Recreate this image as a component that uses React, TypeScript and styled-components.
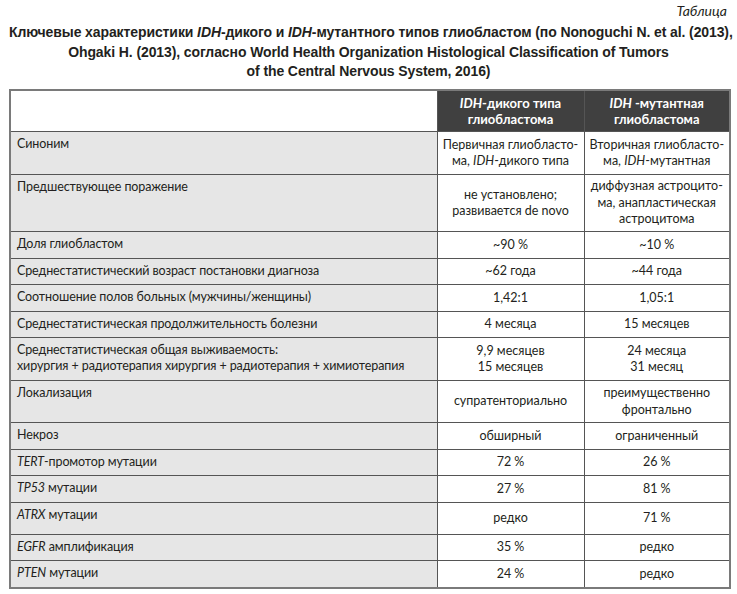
import React from "react";
import styled, { createGlobalStyle } from "styled-components";

const Global = createGlobalStyle`
  html, body { margin: 0; padding: 0; background: #ffffff; }
  body { font-family: Lato, "Open Sans", sans-serif; color: #231f20; }
`;

const Page = styled.div`
  width: 737px;
  padding: 2px 9px 0 9px;
  box-sizing: border-box;
`;

const Label = styled.div`
  text-align: right;
  font-style: italic;
  font-size: 14px;
  line-height: 18px;
  padding-right: 1px;
`;

const Caption = styled.h1`
  margin: 3px 0 7px 0;
  text-align: center;
  font-family: "Liberation Sans", sans-serif;
  font-weight: 700;
  font-size: 14px;
  line-height: 19.5px;
  letter-spacing: -0.1px;
  white-space: nowrap;
`;

const Table = styled.table`
  width: 720px;
  border-collapse: collapse;
  border: 2px solid #7a7a7a;
  font-size: 12.5px;
  table-layout: fixed;
`;

const Row = styled.tr<{ $h?: number }>`
  height: ${(p) => (p.$h ? `${p.$h}px` : "auto")};
`;

const HeadBlank = styled.th`
  background: #ffffff;
  border: 1px solid #555;
`;

const HeadCell = styled.th`
  background: #404040;
  color: #ffffff;
  font-weight: 700;
  font-size: 13px;
  line-height: 16px;
  text-align: center;
  vertical-align: middle;
  border: 1px solid #555;
  padding: 4px 4px;
`;

const NameCell = styled.td`
  background: #e6e6e6;
  border: 1px solid #555;
  vertical-align: top;
  padding: 4px 6px;
  line-height: 16px;
  letter-spacing: -0.1px;
`;

const ValueCell = styled.td`
  background: #ffffff;
  border: 1px solid #555;
  text-align: center;
  vertical-align: middle;
  padding: 3px 3px;
  line-height: 16.5px;
`;

type R = { name: React.ReactNode; a: React.ReactNode; b: React.ReactNode; h?: number };

const rows: R[] = [
  {
    name: "Синоним",
    a: <>Первичная глиобласто-<br />ма, <i>IDH</i>-дикого типа</>,
    b: <>Вторичная глиобласто-<br />ма, <i>IDH</i>-мутантная</>,
    h: 43,
  },
  {
    name: "Предшествующее поражение",
    a: <>не установлено;<br />развивается de novo</>,
    b: <>диффузная астроцито-<br />ма, анапластическая<br />астроцитома</>,
    h: 57,
  },
  { name: "Доля глиобластом", a: "~90\u202F%", b: "~10\u202F%", h: 27 },
  { name: "Среднестатистический возраст постановки диагноза", a: "~62 года", b: "~44 года", h: 26 },
  { name: "Соотношение полов больных (мужчины/женщины)", a: "1,42:1", b: "1,05:1", h: 27 },
  { name: "Среднестатистическая продолжительность болезни", a: "4 месяца", b: "15 месяцев", h: 26 },
  {
    name: <>Среднестатистическая общая выживаемость:<br />хирургия + радиотерапия хирургия + радиотерапия + химиотерапия</>,
    a: <>9,9 месяцев<br />15 месяцев</>,
    b: <>24 месяца<br />31 месяц</>,
    h: 43,
  },
  { name: "Локализация", a: "супратенториально", b: <>преимущественно<br />фронтально</>, h: 42 },
  { name: "Некроз", a: "обширный", b: "ограниченный", h: 27 },
  { name: <><i>TERT</i>-промотор мутации</>, a: "72\u202F%", b: "26\u202F%", h: 26 },
  { name: <><i>TP53</i> мутации</>, a: "27\u202F%", b: "81\u202F%", h: 27 },
  { name: <><i>ATRX</i> мутации</>, a: "редко", b: "71\u202F%", h: 32 },
  { name: <><i>EGFR</i> амплификация</>, a: "35\u202F%", b: "редко", h: 26 },
  { name: <><i>PTEN</i> мутации</>, a: "24\u202F%", b: "редко", h: 27 },
];

export default function App() {
  return (
    <Page>
      <Global />
      <Label>Таблица</Label>
      <Caption>
        Ключевые характеристики <i>IDH</i>-дикого и <i>IDH</i>-мутантного типов глиобластом (по Nonoguchi N. et al. (2013),
        <br />
        Ohgaki H. (2013), согласно World Health Organization Histological Classification of Tumors
        <br />
        of the Central Nervous System, 2016)
      </Caption>
      <Table>
        <colgroup>
          <col style={{ width: 427 }} />
          <col style={{ width: 147 }} />
          <col style={{ width: 146 }} />
        </colgroup>
        <thead>
          <Row $h={42}>
            <HeadBlank />
            <HeadCell>
              <i>IDH</i>-дикого типа
              <br />
              глиобластома
            </HeadCell>
            <HeadCell>
              <i>IDH</i> -мутантная
              <br />
              глиобластома
            </HeadCell>
          </Row>
        </thead>
        <tbody>
          {rows.map((r, i) => (
            <Row key={i} $h={r.h}>
              <NameCell>{r.name}</NameCell>
              <ValueCell>{r.a}</ValueCell>
              <ValueCell>{r.b}</ValueCell>
            </Row>
          ))}
        </tbody>
      </Table>
    </Page>
  );
}
